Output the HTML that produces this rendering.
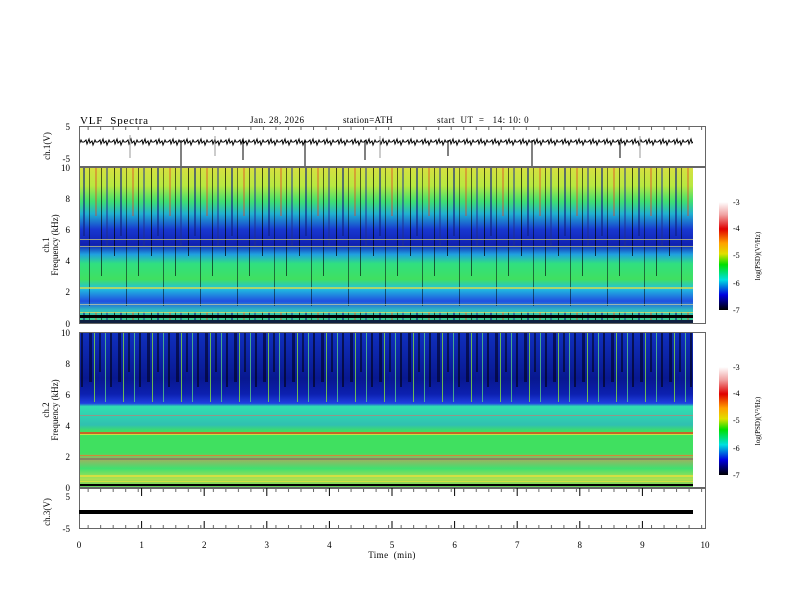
<!DOCTYPE html>
<html><head><style>
html,body{margin:0;padding:0;background:#fff;width:792px;height:612px;overflow:hidden}
svg{display:block}
text{font-family:"Liberation Serif",serif;fill:#000;white-space:pre}
</style></head><body>
<svg width="792" height="612" viewBox="0 0 792 612" xmlns="http://www.w3.org/2000/svg" xml:space="preserve">
<defs>
<linearGradient id="g1" x1="0" y1="0" x2="0" y2="1">
<stop offset="0" stop-color="#d8e040"/>
<stop offset="0.12" stop-color="#b8e840"/>
<stop offset="0.22" stop-color="#40e070"/>
<stop offset="0.3" stop-color="#20b0d0"/>
<stop offset="0.4" stop-color="#1838d0"/>
<stop offset="0.5" stop-color="#1020b0"/>
<stop offset="0.56" stop-color="#20a0e0"/>
<stop offset="0.62" stop-color="#30e080"/>
<stop offset="0.72" stop-color="#40e060"/>
<stop offset="0.78" stop-color="#20c0e0"/>
<stop offset="0.86" stop-color="#2050e0"/>
<stop offset="0.92" stop-color="#30c0c0"/>
<stop offset="1" stop-color="#40d080"/>
</linearGradient>
<linearGradient id="g2" x1="0" y1="0" x2="0" y2="1">
<stop offset="0" stop-color="#1030c0"/>
<stop offset="0.3" stop-color="#081890"/>
<stop offset="0.4" stop-color="#0c20b0"/>
<stop offset="0.46" stop-color="#2040e0"/>
<stop offset="0.48" stop-color="#30e0b0"/>
<stop offset="0.6" stop-color="#30c0b0"/>
<stop offset="0.64" stop-color="#40e060"/>
<stop offset="0.78" stop-color="#40e060"/>
<stop offset="0.82" stop-color="#a0b060"/>
<stop offset="0.88" stop-color="#40e070"/>
<stop offset="0.95" stop-color="#b0e050"/>
<stop offset="1" stop-color="#60d060"/>
</linearGradient>
<linearGradient id="cb" x1="0" y1="0" x2="0" y2="1">
<stop offset="0" stop-color="#ffffff"/>
<stop offset="0.12" stop-color="#f0a0a0"/>
<stop offset="0.25" stop-color="#e00000"/>
<stop offset="0.38" stop-color="#ffa000"/>
<stop offset="0.48" stop-color="#e0e000"/>
<stop offset="0.58" stop-color="#00e000"/>
<stop offset="0.72" stop-color="#00e0e0"/>
<stop offset="0.86" stop-color="#0000e0"/>
<stop offset="1" stop-color="#000000"/>
</linearGradient>
<pattern id="s1" width="37" height="156" patternUnits="userSpaceOnUse">
<rect x="3" y="0" width="1" height="100" fill="#000" opacity=".7"/>
<rect x="9" y="0" width="2" height="80" fill="#102080" opacity=".6"/>
<rect x="15" y="0" width="1" height="150" fill="#000" opacity=".5"/>
<rect x="21" y="0" width="2" height="60" fill="#e04020" opacity=".4"/>
<rect x="27" y="0" width="1" height="120" fill="#000" opacity=".6"/>
<rect x="32" y="0" width="2" height="90" fill="#203090" opacity=".5"/>
</pattern>
<pattern id="s2" width="29" height="156" patternUnits="userSpaceOnUse">
<rect x="2" y="0" width="3" height="70" fill="#000020" opacity=".6"/>
<rect x="7" y="0" width="1" height="110" fill="#80e040" opacity=".8"/>
<rect x="12" y="0" width="2" height="60" fill="#000" opacity=".5"/>
<rect x="18" y="0" width="1" height="90" fill="#60e080" opacity=".7"/>
<rect x="23" y="0" width="2" height="75" fill="#000010" opacity=".6"/>
</pattern>
<pattern id="zz" x="0" y="127" width="14" height="30" patternUnits="userSpaceOnUse">
<path d="M0 15 L2 13 L3 17 L5 12 L6 16 L8 14 L9 18 L11 13 L12 15 L14 15" stroke="#000" fill="none" stroke-width="1"/>
</pattern>
<pattern id="tx" width="12.52" height="5" patternUnits="userSpaceOnUse">
<rect x="0" y="0" width="1" height="5" fill="#666"/>
</pattern>
</defs>

<text x="80" y="124" font-size="11" letter-spacing="0.8">VLF  Spectra</text>
<text x="250" y="123" font-size="9" letter-spacing="0.5">Jan. 28, 2026</text>
<text x="343" y="123" font-size="9" letter-spacing="0.3">station=ATH</text>
<text x="437" y="123" font-size="9" letter-spacing="0.5">start  UT  =   14: 10: 0</text>

<!-- ch1 -->
<rect x="79.5" y="126.5" width="626" height="40" fill="#fff" stroke="#666"/>
<rect x="80" y="127" width="613" height="30" fill="url(#zz)"/>
<g stroke="#999"><line x1="130" y1="135" x2="130" y2="158"/><line x1="215" y1="136" x2="215" y2="156"/><line x1="380" y1="136" x2="380" y2="158"/><line x1="640" y1="136" x2="640" y2="158"/></g>
<g stroke="#000"><line x1="181" y1="140" x2="181" y2="166"/><line x1="243" y1="140" x2="243" y2="160"/><line x1="305" y1="140" x2="305" y2="166"/><line x1="365" y1="140" x2="365" y2="160"/><line x1="448" y1="140" x2="448" y2="156"/><line x1="532" y1="140" x2="532" y2="166"/><line x1="620" y1="140" x2="620" y2="158"/></g>
<text x="70" y="130" font-size="9" text-anchor="end">5</text>
<text x="70" y="162" font-size="9" text-anchor="end">-5</text>
<text transform="translate(50,146) rotate(-90)" font-size="9" text-anchor="middle">ch.1(V)</text>

<!-- spec1 -->
<rect x="79" y="167" width="614" height="156" fill="url(#g1)"/>
<rect x="79" y="167" width="614" height="156" fill="url(#s1)"/>
<g opacity=".7">
<rect x="79" y="239" width="614" height="1" fill="#d0d080"/>
<rect x="79" y="246" width="614" height="1" fill="#d0d080"/>
<rect x="79" y="287" width="614" height="2" fill="#e0e040"/>
<rect x="79" y="304" width="614" height="1" fill="#d0d0a0"/>
<rect x="79" y="312" width="614" height="1" fill="#f0e060"/>
</g>
<rect x="79" y="315" width="614" height="3" fill="#000"/>
<rect x="79" y="320" width="614" height="3" fill="#102040"/>
<rect x="79.5" y="167.5" width="626" height="156" fill="none" stroke="#666"/>
<g font-size="9" text-anchor="end">
<text x="70" y="171">10</text><text x="70" y="202">8</text><text x="70" y="233">6</text><text x="70" y="264">4</text><text x="70" y="295">2</text><text x="70" y="327">0</text>
</g>
<text transform="translate(49,245) rotate(-90)" font-size="9" text-anchor="middle">ch.1</text>
<text transform="translate(58,245) rotate(-90)" font-size="9" text-anchor="middle">Frequency (kHz)</text>
<rect x="719" y="202" width="9" height="108" fill="url(#cb)"/>
<g font-size="8"><text x="733" y="205">-3</text><text x="733" y="231">-4</text><text x="733" y="258">-5</text><text x="733" y="286">-6</text><text x="733" y="313">-7</text></g>
<text transform="translate(760,256) rotate(-90)" font-size="7" text-anchor="middle">log(PSD)(V²/Hz)</text>

<!-- spec2 -->
<rect x="79" y="332" width="614" height="155" fill="url(#g2)"/>
<rect x="79" y="332" width="614" height="70" fill="url(#s2)"/>
<g opacity=".85">
<rect x="79" y="415" width="614" height="1" fill="#a09080"/>
<rect x="79" y="432" width="614" height="2" fill="#e05020"/>
<rect x="79" y="434" width="614" height="1" fill="#e0e040"/>
<rect x="79" y="455" width="614" height="1" fill="#e08030"/>
<rect x="79" y="458" width="614" height="2" fill="#808060"/>
<rect x="79" y="475" width="614" height="2" fill="#e0e040"/>
<rect x="79" y="481" width="614" height="1" fill="#e0e040"/>
</g>
<rect x="79" y="484" width="614" height="2" fill="#000"/>
<rect x="79.5" y="332.5" width="626" height="155" fill="none" stroke="#666"/>
<g font-size="9" text-anchor="end">
<text x="70" y="336">10</text><text x="70" y="367">8</text><text x="70" y="398">6</text><text x="70" y="429">4</text><text x="70" y="460">2</text><text x="70" y="491">0</text>
</g>
<text transform="translate(49,410) rotate(-90)" font-size="9" text-anchor="middle">ch.2</text>
<text transform="translate(58,410) rotate(-90)" font-size="9" text-anchor="middle">Frequency (kHz)</text>
<rect x="719" y="367" width="9" height="108" fill="url(#cb)"/>
<g font-size="8"><text x="733" y="370">-3</text><text x="733" y="396">-4</text><text x="733" y="423">-5</text><text x="733" y="451">-6</text><text x="733" y="478">-7</text></g>
<text transform="translate(760,421) rotate(-90)" font-size="7" text-anchor="middle">log(PSD)(V²/Hz)</text>

<!-- ch3 -->
<rect x="79.5" y="488.5" width="626" height="40" fill="#fff" stroke="#666"/>
<rect x="79" y="510" width="614" height="4" fill="#000"/>
<text x="70" y="500" font-size="9" text-anchor="end">5</text>
<text x="70" y="532" font-size="9" text-anchor="end">-5</text>
<text transform="translate(50,512) rotate(-90)" font-size="9" text-anchor="middle">ch.3(V)</text>

<!-- ticks -->
<rect x="79" y="489" width="627" height="3" fill="url(#tx)"/>
<rect x="79" y="525" width="627" height="3" fill="url(#tx)"/>
<rect x="79" y="127" width="627" height="3" fill="url(#tx)"/>
<g stroke="#000">
<line x1="141.6" y1="488" x2="141.6" y2="496"/><line x1="204.2" y1="488" x2="204.2" y2="496"/><line x1="266.8" y1="488" x2="266.8" y2="496"/><line x1="329.4" y1="488" x2="329.4" y2="496"/><line x1="392" y1="488" x2="392" y2="496"/><line x1="454.6" y1="488" x2="454.6" y2="496"/><line x1="517.2" y1="488" x2="517.2" y2="496"/><line x1="579.8" y1="488" x2="579.8" y2="496"/><line x1="642.4" y1="488" x2="642.4" y2="496"/>
<line x1="141.6" y1="521" x2="141.6" y2="528"/><line x1="204.2" y1="521" x2="204.2" y2="528"/><line x1="266.8" y1="521" x2="266.8" y2="528"/><line x1="329.4" y1="521" x2="329.4" y2="528"/><line x1="392" y1="521" x2="392" y2="528"/><line x1="454.6" y1="521" x2="454.6" y2="528"/><line x1="517.2" y1="521" x2="517.2" y2="528"/><line x1="579.8" y1="521" x2="579.8" y2="528"/><line x1="642.4" y1="521" x2="642.4" y2="528"/>
</g>
<g font-size="9" text-anchor="middle">
<text x="79" y="548">0</text><text x="141.6" y="548">1</text><text x="204.2" y="548">2</text><text x="266.8" y="548">3</text><text x="329.4" y="548">4</text><text x="392" y="548">5</text><text x="454.6" y="548">6</text><text x="517.2" y="548">7</text><text x="579.8" y="548">8</text><text x="642.4" y="548">9</text><text x="705" y="548">10</text>
</g>
<text x="392" y="558" font-size="9" text-anchor="middle" letter-spacing="0.4">Time  (min)</text>
</svg>
</body></html>
